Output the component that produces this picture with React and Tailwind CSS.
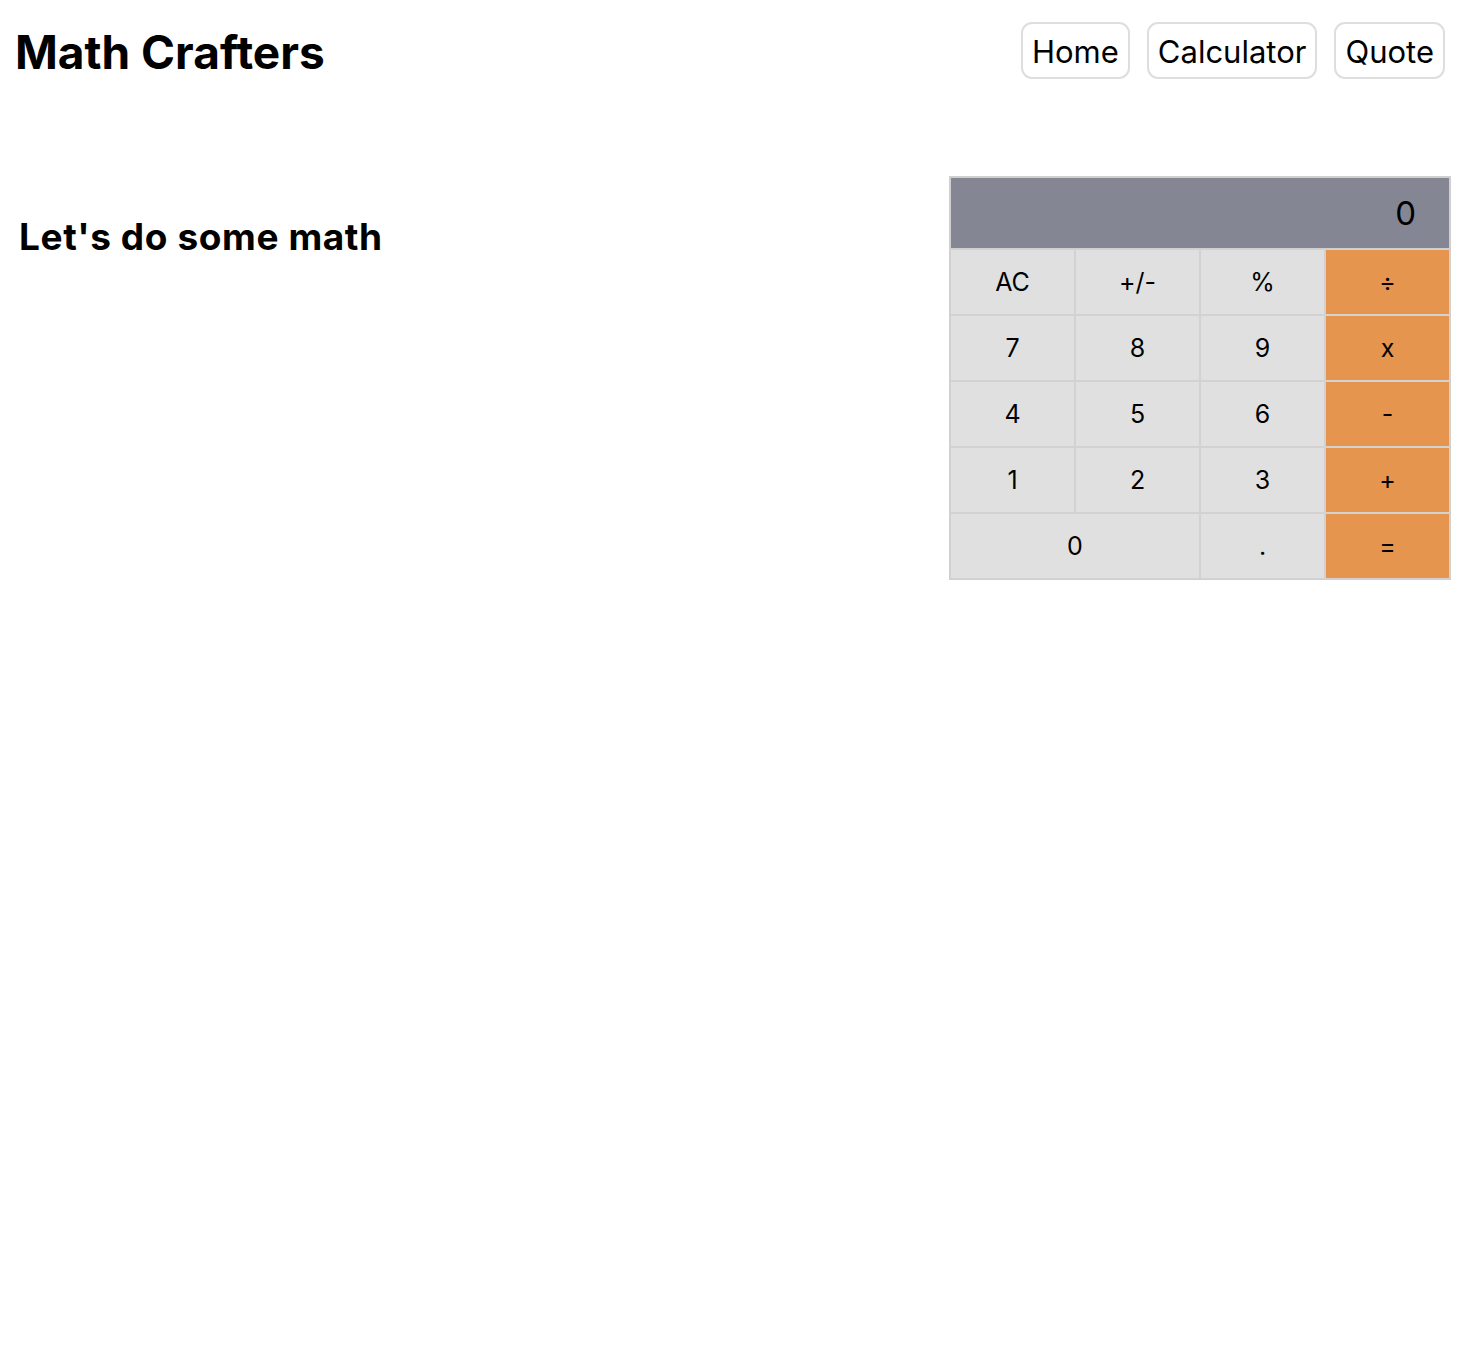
import React, { useState } from "react";

const keys = [
  { label: "AC", kind: "fn" },
  { label: "+/-", kind: "fn" },
  { label: "%", kind: "fn" },
  { label: "÷", kind: "op" },
  { label: "7" },
  { label: "8" },
  { label: "9" },
  { label: "x", kind: "op" },
  { label: "4" },
  { label: "5" },
  { label: "6" },
  { label: "-", kind: "op" },
  { label: "1" },
  { label: "2" },
  { label: "3" },
  { label: "+", kind: "op" },
  { label: "0", wide: true },
  { label: "." },
  { label: "=", kind: "op" },
];

function Calculator() {
  const [display] = useState("0");

  return (
    <div className="w-[502px] border border-[#cfcfcf] bg-[#e0e0e0]">
      <div className="h-[72px] border border-[#cfcfcf] bg-[#858694] flex items-center justify-end pr-[33px] pt-[2px] text-[33px] text-black">
        {display}
      </div>
      <div className="grid grid-cols-4">
        {keys.map((k) => (
          <button
            key={k.label}
            className={`h-[66px] border border-[#d2d2d2] text-[25px] text-black flex items-center justify-center pt-[2px] ${
              k.wide ? "col-span-2" : ""
            } ${k.kind === "op" ? "bg-[#e6954e]" : "bg-[#e0e0e0]"}`}
          >
            {k.label}
          </button>
        ))}
      </div>
    </div>
  );
}

export default function App() {
  return (
    <div className="min-h-screen bg-white font-['Inter',sans-serif] text-black">
      {/* Header */}
      <header className="flex items-center justify-between pl-[15px] pr-[19px] pt-[22px]">
        <h1 className="text-[46px] font-bold leading-none mt-[2px]">Math Crafters</h1>
        <nav className="flex gap-[17px]">
          {["Home", "Calculator", "Quote"].map((item) => (
            <button
              key={item}
              className="h-[57px] px-[9px] pt-[2px] border-2 border-[#dedede] rounded-[11px] text-[31px] leading-none bg-white"
            >
              {item}
            </button>
          ))}
        </nav>
      </header>

      {/* Main */}
      <main className="flex justify-between pl-[19px] pr-[13px] mt-[97px]">
        <h2 className="text-[37px] font-bold mt-[42px] leading-none tracking-[0.6px]">Let's do some math</h2>
        <Calculator />
      </main>
    </div>
  );
}
